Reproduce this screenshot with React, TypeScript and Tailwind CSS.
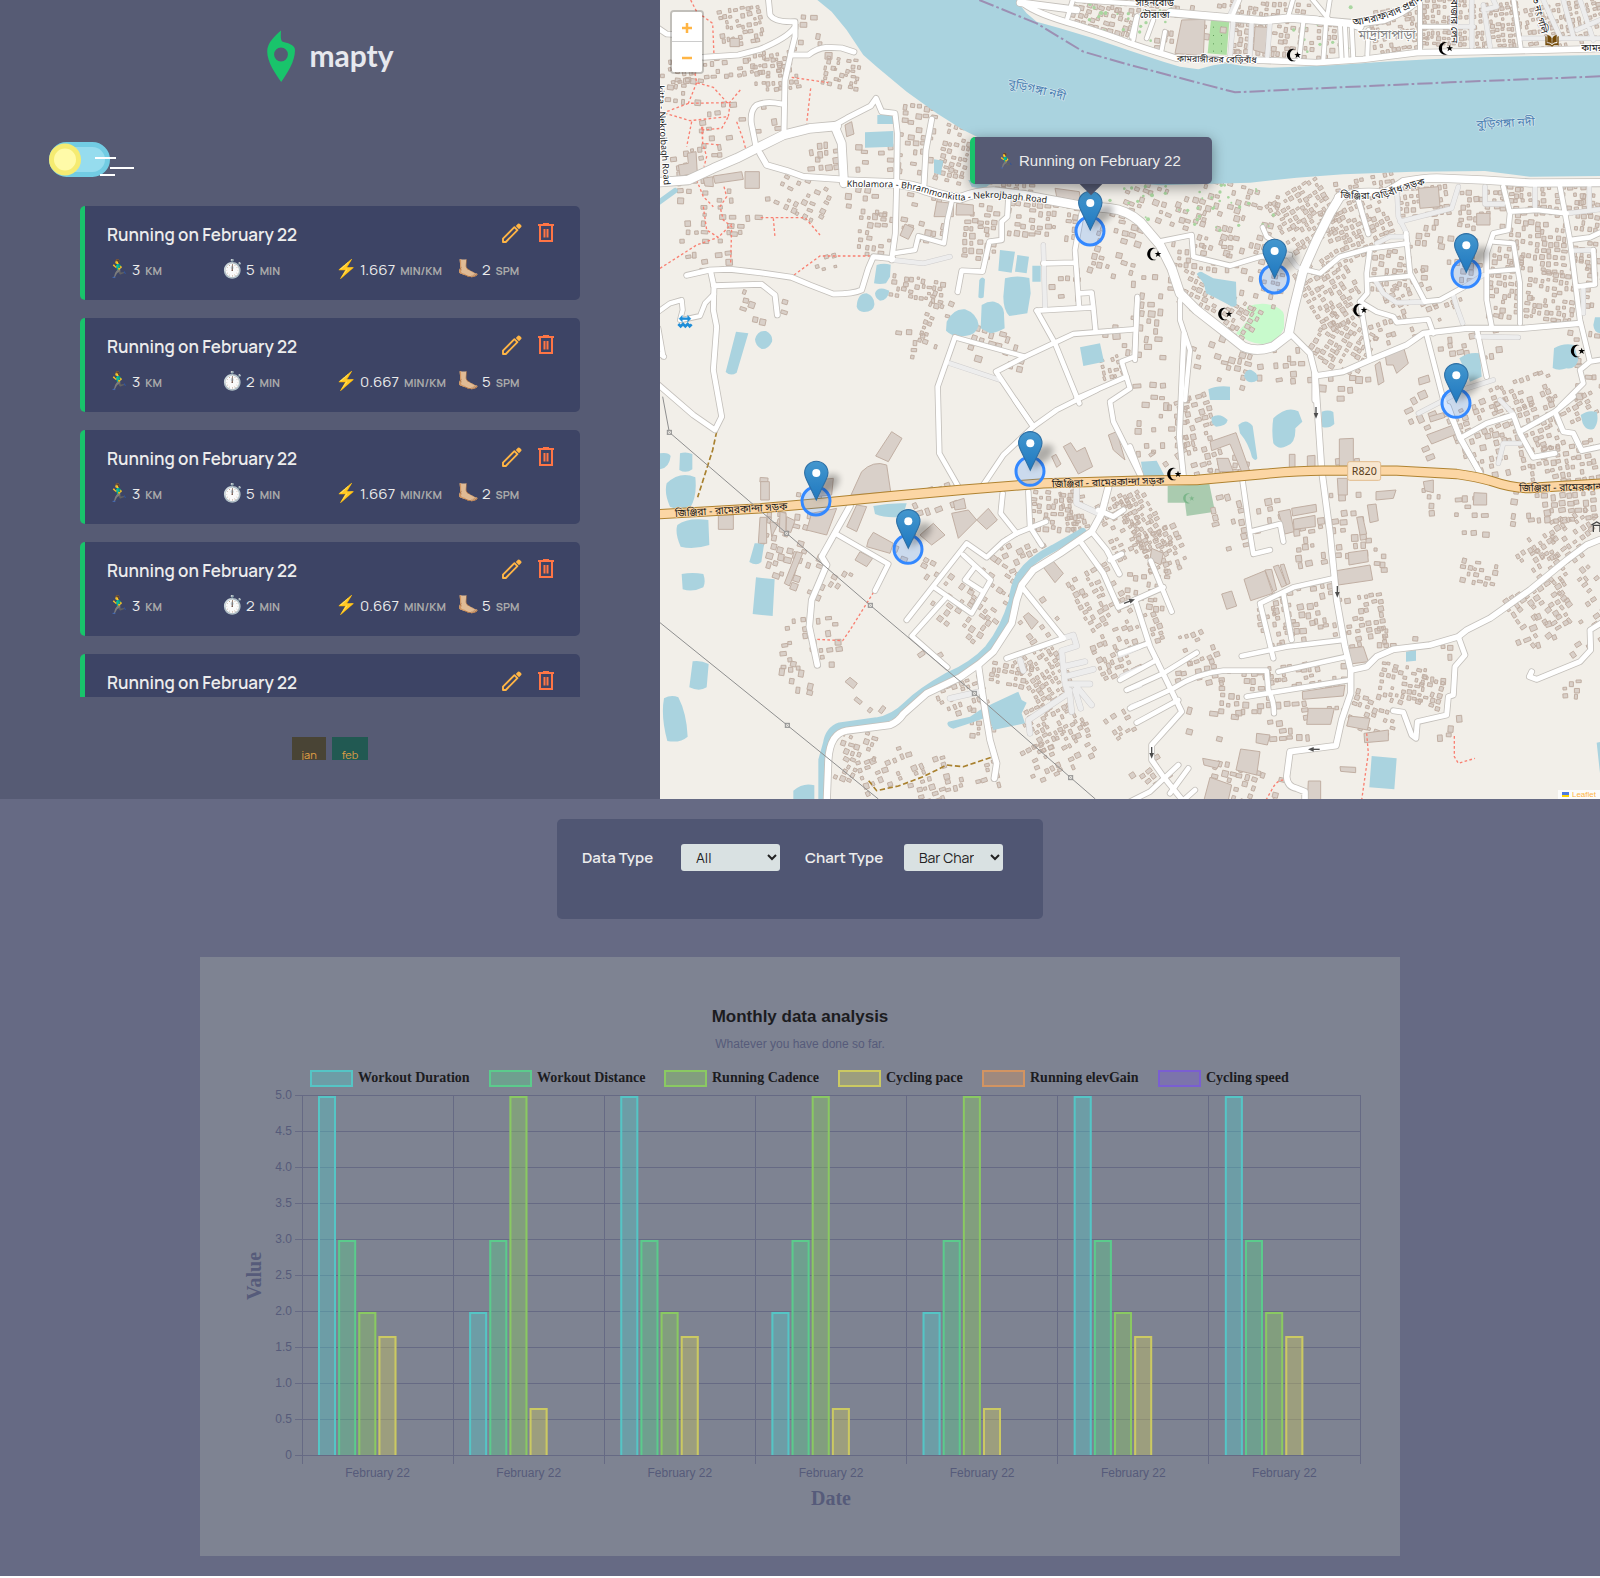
import React from "react";

/* ------------------------------------------------------------------ */
/* Map data: four tiles, drawn at three units per pixel                */
/* ------------------------------------------------------------------ */

type Tile = "A" | "B" | "C" | "D";

const ORIGIN: Record<Tile, [number, number]> = {
  A: [0, 0],
  B: [1410, 0],
  C: [0, 1200],
  D: [1410, 1200],
};

const place = (t: Tile) => `translate(${ORIGIN[t][0]} ${ORIGIN[t][1]})`;

type Shape = [Tile, string];
type Road = [Tile, number, string];

const water: Shape[] = [
  ["A", "M472 0L515 35L560 90L610 165L650 200L740 275L830 340L910 390L990 430L1300 540L1500 556L1770 548L1910 533L2050 523L2260 515L2475 513L2610 530L2820 528V165L2640 168L2460 172L2310 178L2170 185L2030 195L1910 200L1830 203L1750 198L1700 190L1660 196L1615 208L1560 200L1510 185L1410 152L1300 115L1200 85L1130 65L1100 40L1080 15L1075 0Z"],
  ["A", "M652 345H700V372H652ZM615 397L700 393V440L615 443ZM822 478L850 482L842 525L822 518ZM925 540L1000 545L970 568L935 560Z"],
  ["A", "M650 795Q670 788 692 794L690 830L678 850Q660 854 642 850ZM645 880Q650 862 672 866L688 872Q684 900 660 902Q646 896 645 880Z"],
  ["A", "M590 920Q592 880 620 880Q645 890 643 915Q640 936 612 936Q594 934 590 920ZM228 995L265 1000L230 1118Q212 1130 197 1116ZM285 1018Q292 990 318 993Q340 1005 336 1025Q325 1048 305 1047Q286 1038 285 1018Z"],
  ["A", "M1020 750L1065 755L1055 818L1015 812ZM1072 765L1107 770L1100 820L1065 815ZM1117 797H1142V845H1117ZM1035 835Q1070 824 1108 834L1112 880L1102 940L1048 948Q1030 930 1030 890ZM958 840Q966 826 975 838L971 892Q962 898 955 892Z"],
  ["A", "M860 965Q880 925 915 928Q950 940 956 975Q950 1005 915 1008Q880 1014 858 992ZM965 915Q985 903 1003 905Q1035 915 1032 945L1034 985Q1010 998 990 1000L962 985ZM1260 1042L1320 1030L1332 1085L1270 1098Z"],
  ["B", "M200 822Q212 810 222 820L250 835L318 845L320 915Q308 926 296 914L250 890L228 880L222 852Z"],
  ["B", "M342 1128Q348 1106 364 1110Q386 1120 383 1140Q366 1152 350 1142ZM235 1168Q260 1156 300 1160V1200H240ZM988 1075Q1015 1055 1050 1060L1055 1130L1020 1145ZM1272 1045Q1300 1028 1332 1035L1345 1080Q1335 1110 1310 1105Q1285 1114 1268 1104ZM1395 952H1410V1000Q1392 998 1390 975Z"],
  ["C", "M0 160Q26 156 32 168Q28 204 0 208ZM60 160Q78 154 97 162V208Q78 222 58 210ZM20 250Q60 212 106 232Q112 290 90 324Q58 334 30 320Q12 280 20 250ZM52 375Q82 352 145 360L148 435Q100 450 62 440Q44 400 52 375ZM284 430Q298 428 312 434L304 486Q290 500 268 486ZM65 522Q98 516 130 522Q138 545 130 562Q98 578 68 568ZM288 532L344 538L338 648L278 642Z"],
  ["C", "M98 784Q122 780 146 792L140 862Q118 876 88 862ZM12 895Q34 882 55 892Q80 940 83 1010Q60 1030 22 1023Q2 950 12 895ZM640 318Q690 308 740 310L728 350Q680 356 645 342ZM400 1172Q430 1146 463 1156V1200H400Z"],
  ["C", "M865 965L930 950L960 930L1000 910L1075 875L1085 900L1100 908L1085 940L1095 970L1000 990L985 950L930 970L880 986Q862 982 862 970Z"],
  ["D", "M245 52Q270 36 293 60Q290 78 258 80Q242 72 245 52ZM325 75Q348 52 368 78L382 175Q376 186 366 172Q356 130 330 100ZM430 55Q470 16 505 34L517 65L496 85Q498 130 470 138Q446 152 430 130Q424 90 430 55ZM575 35Q596 28 610 36L613 72Q596 88 575 80ZM1352 45Q1375 28 1400 36Q1408 64 1392 86Q1370 96 1358 70ZM33 185L80 182L105 230H40Z"],
  ["D", "M725 1068L800 1075L793 1168L718 1162ZM828 755L858 750V782L828 785ZM1400 1028L1410 1026V1120Z"],
];

const canals: Road[] = [
  ["C", 22, "M1268 395L1180 445Q1110 480 1080 525Q1060 560 1058 600Q1030 690 985 745Q940 795 860 830Q780 875 740 915Q700 955 650 963L540 978Q506 990 500 1030L486 1080V1200"],
  ["A", 16, "M-5 608L45 572"],
];

const highway: Shape[] = [
  ["C", "M-10 343L300 325L470 310L700 288L900 270L1150 250L1440 242L1610 240L1810 222Q1930 210 2010 212L2210 212L2390 222Q2450 230 2490 242Q2560 266 2610 264L2840 250"],
];

const roads: Road[] = [
  ["A", 26, "M-10 547L85 540L160 505L230 475L300 440L370 405L450 385L530 378"],
  ["A", 24, "M525 382L545 430L552 550"],
  ["A", 26, "M552 545L700 550Q760 555 800 572Q860 592 900 595Q950 575 1000 575L1100 587L1250 615L1350 625Q1400 630 1440 665L1500 735L1535 805L1560 880L1610 930L1700 1000L1750 1040Q1790 1058 1840 1040L1885 1005L1900 930L1930 810L1970 720L2010 640L2040 590"],
  ["B", 22, "M625 592Q690 570 760 580Q800 560 820 545Q880 535 920 534L1060 540L1200 549L1410 548"],
  ["B", 22, "M120 38L400 62L480 54L660 70L690 80M480 54L560 60"],
  ["B", 20, "M-330 8L-160 30M670 72L760 60Q820 40 865 0"],
  ["B", 17, "M-320 10Q-280 42 -160 75Q-50 110 0 130L60 150L140 175L400 181L560 188L700 178L860 158L1050 155L1410 146"],
  ["A", 15, "M325 -5L330 45Q345 68 405 65L405 110L395 150L375 240L372 392"],
  ["A", 15, "M402 85Q380 115 300 148L235 165L130 172M-5 85L20 102L60 104"],
  ["A", 15, "M392 165H445Q470 145 500 142L545 144L582 156"],
  ["A", 15, "M365 312Q320 302 290 315Q270 330 274 370L288 440"],
  ["A", 15, "M530 372L560 355L632 318L648 295L665 335L705 340L712 400L710 550L706 700L695 780"],
  ["A", 15, "M815 358L798 450L792 555"],
  ["A", 17, "M300 460L320 495L380 512L430 530L548 538"],
  ["A", 15, "M80 826L150 810L210 808L300 818L395 832L450 855L520 882Q580 882 605 870L625 805L640 770L698 776"],
  ["A", 13, "M700 760L765 750L775 708L852 730L862 660L875 605M885 1012L985 1040L1095 1070"],
  ["A", 15, "M152 815L162 860L160 930L170 980L160 1110L185 1250L165 1290L100 1245L-10 1150M160 857L305 853L345 885L352 945"],
  ["A", 13, "M162 882L135 910L120 948L65 960M-5 935L30 910L65 900L68 930L60 960"],
  ["A", 13, "M-5 985L10 1070M-5 1060L12 1070"],
  ["A", 14, "M1045 595L1042 650L1025 665V720L988 725L968 815L905 812L893 876"],
  ["A", 14, "M1265 640L1245 750L1257 920M1150 790L1245 788M1130 932L1300 922L1295 878L1257 880M1300 922L1307 995"],
  ["A", 14, "M1130 932L1185 1030L1258 1210M1420 988L1240 1002L1180 1030L1095 1070L1008 1115L1065 1200L1120 1280"],
  ["A", 14, "M885 1012L833 1160L838 1360L895 1460"],
  ["A", 14, "M1432 895L1424 1070L1385 1085L1410 1165L1350 1205L1360 1265L1440 1425M1400 1130L1250 1195"],
  ["A", 13, "M1240 -5L1222 55M1430 50L1415 110M1250 0L1440 12"],
  ["B", 12, "M870 -5V150M630 75L635 180M645 80L650 180M520 65L508 172M588 70L580 180M665 80L670 175M715 90L712 165M22 48L10 120M70 60L50 115M105 95L95 150"],
  ["B", 12, "M1150 -5L1172 142M870 80H960M330 -5L310 42M490 -5L475 48M545 -5L600 62M600 -5L590 60"],
  ["B", 14, "M1120 560L1140 640L1135 690L1090 700L1070 760V900L1085 980M1140 635L1220 630L1310 640"],
  ["B", 14, "M1290 560L1320 720L1350 960L1380 1085L1350 1110L1360 1150L1290 1220M1320 720L1380 712L1410 698M1340 860L1395 853L1390 750M1378 1085L1410 1080"],
  ["B", 13, "M1090 725L1150 730L1170 850V970M1075 815L1160 808"],
  ["B", 16, "M480 1000L540 1060L555 1120V1200M555 1128L640 1115L720 1080L830 1035L880 1000L1010 985L1180 985L1350 970"],
  ["B", 14, "M530 810L570 820L630 770L720 745L832 730M685 600L715 702M720 745L710 820L712 880L690 905L720 1080"],
  ["B", 14, "M712 840L840 828M828 700L840 820L885 905L930 900L1000 862M690 905L740 935L790 950L800 967L895 958L910 1000M890 1005L940 1200L990 1310L1050 1420"],
  ["B", 14, "M1040 985L1070 1130M85 725L185 705L190 770L300 797L390 770L480 765"],
  ["B", 13, "M398 682L410 710L440 730M150 900L150 960L180 1050L165 1200M22 890L15 1080"],
  ["C", 14, "M1065 0L1120 80M1310 -30L1190 30L1120 80L1030 165L965 262"],
  ["C", 17, "M570 318L485 470L500 495L455 600L448 680L472 795"],
  ["C", 14, "M525 400L685 492L645 572M1028 280L1022 340L1070 400M1105 275L1110 380L1145 435"],
  ["C", 14, "M1158 365L1070 400L1030 425L980 472L920 430L740 660M910 465L992 540L935 640L820 560M945 500L915 540L965 572M860 590L755 708L862 802"],
  ["C", 19, "M500 1210L505 1080Q510 1000 560 992L690 975Q715 965 730 942L800 880L900 832L960 790L1000 755L1055 670L1070 600L1085 555L1120 510L1200 460L1295 395L1325 340L1345 262"],
  ["C", 15, "M1265 430L1330 520L1375 622L1510 562M1295 395L1340 450L1378 522M1350 480L1385 462M1085 560L1210 715L1040 775M1315 330L1360 350L1390 330"],
  ["C", 17, "M955 795L975 930L990 1020L1010 1090L1003 1135"],
  ["D", 15, "M162 -200L148 110L160 225M0 140L32 225"],
  ["D", 17, "M555 -80L575 210L600 400L620 600L645 740L662 810V880L635 960L618 1037L480 1055L470 1130Q472 1160 500 1165L525 1175V1210"],
  ["D", 14, "M338 245L360 400L370 462L420 450M360 395L450 372L460 425"],
  ["D", 14, "M610 535L490 562L390 610L430 775M460 580L485 720M335 768L470 740L640 720M445 815L650 770M350 890L660 840M62 482L125 635"],
  ["D", 15, "M15 600L60 740L155 935L65 1035V1080L100 1130L165 1210"],
  ["D", 14, "M-30 760L55 730M-30 840L80 780M-10 870L100 820L200 758M0 925L130 865Q200 820 280 812H410L415 870Q432 900 432 940M20 968L145 900M145 1095L60 1175L0 1205M175 1105L120 1180M195 1170L150 1210"],
  ["D", 17, "M665 810L710 800L740 770L790 748L900 735L985 710L1010 690L1080 655L1200 570L1310 480L1370 435L1420 415"],
  ["D", 15, "M985 710L1005 765L975 800L970 885L955 890L950 945L862 965L858 1015L845 1005L820 937L790 932M1420 665L1380 690L1382 750L1350 785L1220 838L1198 830L1205 815"],
  ["D", 15, "M955 20L990 115L1050 218M990 115L1070 70L1150 45L1170 100L1210 172L1275 160M1170 95L1275 35L1300 95L1330 100L1355 152L1420 138M1275 35L1330 -10"],
];

const lanes: Road[] = [
  ["A", 13, "M1150 735L1155 925M870 1090L1020 1140M700 780L790 790L870 770"],
  ["B", 13, "M310 60L300 170M420 65L412 170M365 62L360 165M320 0L300 45M1025 0V140M960 80L1030 80M1060 15L1080 140M1090 0L1100 20L1060 30M1175 115H1410M1240 0L1290 110M1300 0L1330 110M1350 0L1390 120M1340 90L1410 60"],
  ["B", 13, "M985 560L965 625L810 665M800 560L805 650L830 700M1215 560V620M1065 560V612H1120M1310 640L1410 628M1378 560V630M1330 752L1390 750M740 730L780 710H830"],
  ["B", 13, "M735 840L760 880L800 908L885 906M1000 862L1060 825M968 880L980 920L998 970M1040 1010L1165 1012M470 760L500 800L530 812M1360 860V940"],
  ["C", 16, "M870 895L960 875M1210 715L1240 705L1250 738L1205 752L1215 850L1225 880L1105 960L1110 1000M1215 830L1300 808M1220 852H1290M1210 800L1275 785M1250 860L1295 915M1228 870L1235 935M1245 870L1262 925M1080 780L1090 812M1250 262V310L1315 340"],
  ["C", 14, "M1380 765L1440 740M1385 830L1440 805M1405 868L1440 855M1415 920L1440 910"],
  ["D", 13, "M865 40L1010 -35L1090 -60M1110 0L1150 42M1170 130H1120L1105 190"],
];

const footpaths: Shape[] = [
  ["A", "M92 0L110 35L158 70L162 168M105 220L110 248L160 262L205 312L245 265M110 248L85 310L205 308M0 335L90 362L205 350L210 312M85 310L20 335M95 365L80 440M125 380L128 430L180 435M125 390L185 385L205 350M230 365L250 420L258 450M110 540L130 590L160 620M128 380V430L140 470L132 500"],
  ["A", "M192 560L200 590L180 620L190 660L215 680L212 790M130 620L140 690L175 712L215 672M0 805L110 735L175 712M302 653H435L480 705M340 655L345 712M402 825L480 768L640 768M395 232L505 248M452 265L440 370"],
  ["C", "M472 718L548 722L570 690L640 578"],
  ["D", "M710 1000L715 1060L695 1200M973 1008V1070L985 1090L1035 1075M460 1140Q440 1140 425 1170L408 1200"],
];

const tracks: Shape[] = [
  ["C", "M170 95L158 150L113 292M626 1142L650 1172L715 1158L790 1130L860 1095L910 1100L1000 1070"],
];

const bigBuildings: Shape[] = [
  ["A", "M160 528L245 515L250 538L165 550ZM255 515H298V565H255ZM130 535L158 530L160 560L135 558ZM55 495L85 490L82 460L108 455L112 520L60 528ZM210 115H238V140H210ZM555 375L575 365L582 402L560 410ZM735 672L762 685L745 718L720 706ZM830 605L880 610V650H822ZM1185 565L1258 575L1262 605L1190 590ZM890 610L940 615V645H888Z"],
  ["B", "M155 60L225 58L220 168L135 160ZM375 80L415 82L405 160L370 150ZM865 565L925 560L930 620L870 625ZM765 1060L820 1040L835 1090L800 1120L790 1095L770 1095ZM735 1095L750 1085L762 1145L745 1155ZM865 1135L895 1125L900 1145L868 1155ZM1040 640L1080 640V675H1040Z"],
  ["C", "M695 95L726 115L685 185L647 168ZM605 215Q640 180 680 195L692 275L573 285ZM302 245H328V300H302ZM175 345H220V388H175ZM470 240L520 235L515 285L465 290ZM560 380L590 315L620 320L590 395ZM455 340L530 325L500 405L440 390ZM875 340L925 330L950 360L895 415ZM950 360L985 325L1012 360L980 388ZM780 405L820 370L855 405L815 435ZM625 420L640 397L700 430L690 460L620 440ZM585 480L600 455L638 475L620 500Z"],
  ["C", "M300 352H320V430H295ZM330 365L355 370L335 410ZM360 335L378 340V400L358 395ZM380 350L405 362L392 398L378 390ZM410 455L428 460L388 558L373 550ZM1210 140L1232 128L1250 155L1275 142L1298 200L1255 222ZM1145 495L1170 472L1210 520L1185 548ZM1345 105L1370 95L1395 180L1360 150ZM1090 650L1105 638L1135 665L1115 688ZM555 845L570 832L592 850L580 866ZM880 305L912 295L918 325L885 330ZM1175 170L1188 163L1203 192L1190 202Z"],
  ["D", "M240 125L318 98L358 210L335 215L300 132L245 152ZM628 117L670 115V200H628ZM445 335L480 328L492 395L465 402ZM485 325L558 313L560 335L488 348ZM490 358L555 346L556 380L492 388ZM342 538L405 512L428 580L362 602ZM405 510L425 508L440 570L430 575ZM430 500L445 495L470 555L455 562ZM450 495L462 492L480 550L470 555ZM275 582L305 573L320 618L290 628ZM655 458L712 450L715 485L657 495ZM620 512L720 495L728 540L625 555Z"],
  ["D", "M535 925H613L602 973H530ZM332 1047L390 1055L380 1125L318 1110ZM517 875L645 855L640 888L518 898ZM658 948L720 955L712 990L650 978ZM535 1143H572V1200H532ZM702 1000L775 990V1022L704 1028ZM240 1132L305 1155L295 1200H222ZM738 275L798 270L790 295L738 300ZM712 315L738 312L745 362L720 368ZM680 352L698 350L710 402L690 405ZM1032 278L1070 280V315H1030ZM880 245L910 240V278L885 272ZM890 105L970 75L985 100L905 132ZM897 50L940 38L945 52L902 66ZM655 745L700 740L715 785L660 792ZM380 1000L420 1005L412 1035L378 1028ZM622 235H652V285H625ZM478 163H495V205H478ZM532 168L555 166V202H532ZM218 1075L270 1085L262 1105L222 1095ZM630 1100L677 1102V1118L632 1114ZM260 175L295 175L310 215H268ZM65 445L100 460L92 495L60 480Z"],
];

/* tile, centre x, centre y, width, height, angle, cell, density */
type Cluster = [Tile, number, number, number, number, number, number, number];

const clusters: Cluster[] = [
  ["A", 235, 75, 120, 110, -8, 17, 0.62],
  ["A", 190, 200, 330, 80, -6, 20, 0.5],
  ["A", 345, 210, 130, 110, -5, 17, 0.7],
  ["A", 545, 215, 110, 90, 10, 16, 0.75],
  ["A", 455, 105, 130, 130, 5, 26, 0.3],
  ["A", 60, 260, 130, 110, 5, 22, 0.45],
  ["A", 180, 380, 130, 150, -5, 24, 0.4],
  ["A", 320, 350, 80, 100, -5, 26, 0.4],
  ["A", 80, 490, 110, 90, -5, 22, 0.6],
  ["A", 480, 465, 80, 90, -5, 25, 0.5],
  ["A", 425, 590, 150, 120, 25, 20, 0.5],
  ["A", 640, 470, 120, 90, 0, 24, 0.5],
  ["A", 760, 410, 90, 200, 5, 22, 0.6],
  ["A", 885, 460, 90, 170, 15, 18, 0.75],
  ["A", 130, 660, 160, 190, 0, 24, 0.36],
  ["A", 260, 640, 110, 110, 0, 26, 0.3],
  ["A", 640, 690, 90, 130, 5, 21, 0.6],
  ["A", 620, 600, 130, 90, 5, 26, 0.4],
  ["A", 790, 650, 130, 130, 10, 24, 0.5],
  ["A", 960, 690, 110, 160, 3, 22, 0.75],
  ["A", 1140, 660, 200, 110, 5, 22, 0.75],
  ["A", 1040, 560, 200, 40, 5, 20, 0.6],
  ["A", 1370, 730, 130, 190, 15, 23, 0.45],
  ["A", 1200, 840, 80, 130, 0, 26, 0.4],
  ["A", 490, 800, 90, 70, -15, 18, 0.45],
  ["A", 120, 780, 150, 50, -5, 24, 0.45],
  ["A", 770, 860, 160, 60, 8, 18, 0.6],
  ["A", 825, 955, 70, 170, 18, 19, 0.62],
  ["A", 750, 1030, 90, 80, 5, 24, 0.4],
  ["A", 300, 930, 130, 100, 15, 24, 0.35],
  ["A", 1000, 1030, 200, 80, 15, 26, 0.4],
  ["A", 1380, 980, 110, 150, 0, 30, 0.3],
  ["A", 1350, 1100, 60, 60, -15, 17, 0.8],
  ["A", 1330, 50, 200, 70, 15, 20, 0.8],
  ["B", 60, 25, 250, 40, 5, 20, 0.7],
  ["B", 210, 95, 280, 100, 5, 24, 0.35],
  ["B", 470, 110, 340, 110, 4, 20, 0.65],
  ["B", 400, 22, 280, 44, 5, 18, 0.7],
  ["B", 800, 80, 160, 120, -8, 17, 0.7],
  ["B", 950, 60, 160, 130, 0, 16, 0.85],
  ["B", 1095, 70, 130, 130, -5, 16, 0.85],
  ["B", 1300, 70, 230, 130, -10, 17, 0.8],
  ["B", 110, 610, 260, 90, 18, 22, 0.5],
  ["B", 310, 650, 230, 200, 15, 22, 0.5],
  ["B", 520, 650, 170, 180, -30, 18, 0.8],
  ["B", 700, 550, 180, 40, -10, 19, 0.6],
  ["B", 680, 680, 190, 170, -22, 18, 0.85],
  ["B", 880, 600, 160, 90, -5, 20, 0.7],
  ["B", 1050, 630, 130, 120, 0, 20, 0.6],
  ["B", 1250, 600, 280, 90, 0, 20, 0.75],
  ["B", 950, 740, 200, 170, 5, 24, 0.5],
  ["B", 1220, 740, 180, 160, 3, 20, 0.75],
  ["B", 1120, 850, 90, 220, 5, 20, 0.65],
  ["B", 1260, 890, 150, 150, 5, 19, 0.8],
  ["B", 1370, 700, 80, 240, 5, 20, 0.6],
  ["B", 600, 870, 160, 200, -30, 18, 0.7],
  ["B", 780, 800, 110, 150, 5, 19, 0.65],
  ["B", 640, 1030, 170, 140, 30, 19, 0.75],
  ["B", 830, 880, 150, 120, -20, 19, 0.5],
  ["B", 800, 990, 160, 80, -15, 20, 0.5],
  ["B", 390, 860, 130, 100, 10, 22, 0.45],
  ["B", 220, 770, 200, 80, 5, 21, 0.5],
  ["B", 200, 880, 130, 120, 25, 20, 0.6],
  ["B", 330, 950, 110, 100, 30, 19, 0.6],
  ["B", 60, 950, 130, 260, 5, 26, 0.38],
  ["B", 260, 1070, 170, 130, 15, 24, 0.4],
  ["B", 430, 1090, 200, 100, -5, 24, 0.4],
  ["B", 640, 1160, 150, 70, 0, 28, 0.35],
  ["B", 1000, 1040, 200, 80, -8, 24, 0.35],
  ["B", 1360, 900, 90, 260, 5, 22, 0.4],
  ["B", 1370, 1130, 80, 130, 0, 26, 0.4],
  ["B", 60, 1180, 120, 70, 0, 30, 0.5],
  ["B", 1180, 1180, 200, 100, -20, 20, 0.6],
  ["B", 960, 930, 100, 60, -20, 20, 0.4],
  ["C", 385, 300, 200, 180, 5, 30, 0.2],
  ["C", 360, 440, 120, 170, 15, 26, 0.5],
  ["C", 450, 520, 100, 130, 20, 27, 0.5],
  ["C", 540, 540, 60, 70, 30, 22, 0.3],
  ["C", 830, 270, 180, 90, -20, 28, 0.4],
  ["C", 700, 420, 120, 90, 25, 24, 0.4],
  ["C", 800, 500, 90, 60, 30, 24, 0.5],
  ["C", 440, 720, 170, 140, -5, 23, 0.42],
  ["C", 400, 830, 90, 110, 10, 28, 0.35],
  ["C", 640, 900, 110, 80, 35, 28, 0.3],
  ["C", 900, 620, 170, 140, 35, 24, 0.5],
  ["C", 1000, 560, 120, 160, 35, 22, 0.45],
  ["C", 1080, 440, 120, 90, -25, 22, 0.55],
  ["C", 1180, 330, 140, 120, 5, 21, 0.75],
  ["C", 1380, 380, 100, 180, -25, 19, 0.75],
  ["C", 1240, 330, 70, 120, -10, 18, 0.6],
  ["C", 1310, 590, 130, 170, -28, 20, 0.7],
  ["C", 1140, 660, 130, 120, -35, 24, 0.4],
  ["C", 1050, 820, 120, 60, 10, 18, 0.6],
  ["C", 1150, 830, 120, 170, -30, 17, 0.8],
  ["C", 900, 890, 140, 90, -20, 19, 0.65],
  ["C", 800, 750, 130, 60, -30, 26, 0.3],
  ["C", 1180, 960, 180, 130, -25, 18, 0.65],
  ["C", 1360, 760, 120, 140, -22, 21, 0.75],
  ["C", 1200, 1060, 220, 120, -25, 20, 0.5],
  ["C", 960, 960, 60, 80, 0, 19, 0.5],
  ["C", 600, 1030, 120, 80, 20, 21, 0.55],
  ["C", 720, 1090, 260, 100, -20, 22, 0.5],
  ["C", 880, 1150, 280, 80, -15, 22, 0.5],
  ["C", 560, 1110, 60, 80, 25, 20, 0.5],
  ["C", 1380, 970, 80, 70, -30, 20, 0.65],
  ["D", 90, 60, 150, 190, 0, 23, 0.45],
  ["D", 200, 100, 90, 230, -15, 22, 0.6],
  ["D", 100, 150, 90, 80, -30, 22, 0.5],
  ["D", 310, 190, 150, 60, 5, 22, 0.6],
  ["D", 290, 370, 90, 180, -12, 26, 0.55],
  ["D", 400, 340, 90, 90, -10, 26, 0.4],
  ["D", 540, 430, 100, 150, -8, 25, 0.7],
  ["D", 640, 320, 80, 300, -5, 26, 0.5],
  ["D", 730, 460, 50, 90, 0, 22, 0.5],
  ["D", 520, 640, 180, 160, -8, 24, 0.65],
  ["D", 430, 680, 90, 130, -8, 22, 0.45],
  ["D", 690, 660, 130, 150, -8, 20, 0.65],
  ["D", 800, 710, 130, 60, 0, 22, 0.4],
  ["D", 40, 380, 90, 220, -30, 17, 0.85],
  ["D", 90, 450, 110, 130, -20, 21, 0.6],
  ["D", 50, 560, 130, 120, 5, 22, 0.5],
  ["D", 40, 690, 90, 90, -20, 20, 0.7],
  ["D", 190, 740, 110, 90, -22, 20, 0.5],
  ["D", 200, 820, 140, 80, -10, 22, 0.5],
  ["D", 350, 870, 170, 120, 0, 23, 0.55],
  ["D", 480, 830, 170, 80, -8, 20, 0.6],
  ["D", 620, 860, 70, 150, 0, 22, 0.55],
  ["D", 460, 960, 150, 120, -5, 26, 0.5],
  ["D", 240, 990, 160, 120, 10, 32, 0.3],
  ["D", 730, 930, 140, 110, 18, 21, 0.6],
  ["D", 810, 840, 130, 100, 10, 18, 0.72],
  ["D", 900, 870, 70, 80, 15, 19, 0.5],
  ["D", 930, 790, 60, 120, 0, 24, 0.35],
  ["D", 340, 1150, 200, 110, 15, 24, 0.6],
  ["D", 60, 1120, 110, 80, -35, 22, 0.5],
  ["D", 880, 80, 80, 200, -25, 30, 0.5],
  ["D", 1040, 60, 180, 110, -20, 22, 0.65],
  ["D", 1100, 160, 200, 130, -12, 23, 0.6],
  ["D", 1230, 80, 110, 160, -18, 20, 0.75],
  ["D", 1300, 190, 210, 120, -10, 21, 0.75],
  ["D", 1330, 30, 130, 70, -25, 20, 0.5],
  ["D", 1290, 300, 210, 100, -5, 24, 0.65],
  ["D", 1300, 400, 200, 110, -35, 21, 0.6],
  ["D", 1220, 460, 120, 60, -30, 19, 0.5],
  ["D", 1040, 510, 100, 60, 10, 19, 0.7],
  ["D", 1010, 340, 80, 110, 0, 26, 0.45],
  ["D", 900, 300, 60, 80, 0, 22, 0.55],
  ["D", 1170, 320, 60, 110, 5, 24, 0.4],
  ["D", 1230, 620, 180, 160, -35, 22, 0.5],
  ["D", 1350, 560, 130, 180, -35, 22, 0.5],
  ["D", 1350, 700, 120, 120, -30, 24, 0.45],
  ["D", 1200, 690, 110, 80, -20, 26, 0.35],
  ["D", 950, 980, 60, 70, 0, 26, 0.5],
  ["D", 1320, 865, 50, 50, 0, 19, 0.6],
];

function seeded(seed: number) {
  let s = seed;
  return () => {
    s = (s * 1664525 + 1013904223) % 4294967296;
    return s / 4294967296;
  };
}

/* Scatters small houses on a jittered grid, rotated about the cluster's centre. */
function housesOf([t, cx, cy, w, h, angle, cell, density]: Cluster, seed: number) {
  const rnd = seeded(seed * 7919 + 17);
  const base = (angle * Math.PI) / 180;
  const [ox, oy] = ORIGIN[t];
  let d = "";
  for (let y = -h / 2; y < h / 2; y += cell) {
    for (let x = -w / 2; x < w / 2; x += cell) {
      const keep = rnd();
      const bw = cell * (0.38 + rnd() * 0.45);
      const bh = cell * (0.38 + rnd() * 0.4);
      const jx = x + rnd() * cell * 0.4;
      const jy = y + rnd() * cell * 0.4;
      const a = base + (rnd() - 0.5) * 0.16;
      if (keep > density) continue;
      const px = ox + cx + jx * Math.cos(base) - jy * Math.sin(base);
      const py = oy + cy + jx * Math.sin(base) + jy * Math.cos(base);
      const c = Math.cos(a);
      const s = Math.sin(a);
      const pts = [
        [0, 0],
        [bw, 0],
        [bw, bh],
        [0, bh],
      ].map(([u, v]) => `${(px + u * c - v * s).toFixed(1)} ${(py + u * s + v * c).toFixed(1)}`);
      d += `M${pts.join("L")}Z`;
    }
  }
  return d;
}

const houses = clusters.map(housesOf).join("");

const treeSpots = (() => {
  const rnd = seeded(91);
  const areas: [number, number, number, number, number][] = [
    [1440, 555, 430, 140, 34],
    [1270, 10, 140, 90, 14],
    [1430, 20, 120, 130, 10],
    [1890, 10, 200, 170, 12],
    [1350, 560, 90, 60, 6],
  ];
  return areas.flatMap(([x, y, w, h, n]) =>
    Array.from({ length: n }, () => [Math.round(x + rnd() * w), Math.round(y + rnd() * h), 3 + Math.round(rnd() * 3)]),
  );
})();

const pylons: [number, number][] = [
  [28, 1297],
  [380, 1600],
  [631, 1816],
  [943, 2080],
  [1232, 2333],
  [382, 2176],
];

const mosques: [number, number][] = [
  [1900, 165],
  [2356, 145],
  [1481, 762],
  [1694, 942],
  [2099, 930],
  [2752, 1053],
  [1541, 1422],
];

/* Marker tips in map units */
const pins: [number, number][] = [
  [1291, 690],
  [1844, 834],
  [2419, 817],
  [2389, 1207],
  [469, 1500],
  [745, 1645],
  [1111, 1411],
];

const label = {
  fontFamily: '"Noto Sans", "Noto Sans Bengali", sans-serif',
  stroke: "#ffffff",
  strokeWidth: 6,
  paintOrder: "stroke" as const,
  strokeLinejoin: "round" as const,
};

function Mosque({ x, y, color = "#000", s = 1 }: { x: number; y: number; color?: string; s?: number }) {
  return (
    <g transform={`translate(${x} ${y}) scale(${s})`} fill={color}>
      <path d="M8 -17A19 19 0 1 0 8 17A15 15 0 0 1 -10 0A15.500 15.500 0 0 1 8 -17Z" />
      <path d="M13 -10L15.500 -3L23 -3L17 1.500L19.500 9L13 4.500L6.500 9L9 1.500L3 -3L10.500 -3Z" />
    </g>
  );
}

function Arrow({ x, y, r }: { x: number; y: number; r: number }) {
  return (
    <g transform={`translate(${x} ${y}) rotate(${r})`}>
      <path d="M-17 0H6" stroke="#4d4d4d" strokeWidth="4" />
      <path d="M1 -7L18 0L1 7Z" fill="#4d4d4d" />
    </g>
  );
}

function CityMap() {
  return (
    <svg className="absolute inset-0 h-full w-full" viewBox="0 0 2820 2397" preserveAspectRatio="xMinYMin slice" role="img" aria-label="Street map with workout locations">
      <defs>
        <linearGradient id="pin" x1="0" y1="0" x2="0" y2="1">
          <stop offset="0" stopColor="#4497ce" />
          <stop offset="1" stopColor="#1f78c0" />
        </linearGradient>
        <filter id="soft" x="-50%" y="-50%" width="200%" height="200%">
          <feGaussianBlur stdDeviation="10" />
        </filter>
        <path id="kholamora" d="M560 561L700 562Q760 566 800 580Q860 600 910 601Q970 592 1020 594L1240 618" />
        <path id="nekroj" d="M-10 150Q-6 340 12 556" />
        <path id="river1" d="M1044 263Q1130 276 1245 312" />
        <path id="dike" d="M2040 594Q2130 602 2190 590Q2230 568 2320 548" />
        <path id="hw1" d="M46 1551L420 1527" />
        <path id="hw2" d="M1176 1463L1560 1451" />
        <path id="ashraf" d="M2080 76Q2210 62 2310 -14" />
      </defs>
      <rect width="2820" height="2397" fill="#f2efe9" />
      <path d="M350 920Q390 906 420 914Q462 926 462 945V985Q448 1015 430 1024Q380 1048 318 1000Q350 970 358 950Z" transform={place("B")} fill="#c8facc" />
      <path d="M243 58L298 62L290 165L233 160Z" transform={place("B")} fill="#aedfa3" />
      <g transform={place("B")} fill="#5f9a58">
        {[80, 105, 130, 152].map((y) => (
          <g key={y}>
            <rect x="249" y={y} width="3" height="3" />
            <rect x="273" y={y} width="3" height="3" />
          </g>
        ))}
      </g>
      <path d="M113 258L238 252L255 335L170 348L165 308H113Z" transform={place("D")} fill="#aacbaf" />
      <g fill="#d9d0c9" stroke="#c1afa3" strokeWidth="3">
        <path d={houses} />
        {bigBuildings.map(([t, d], i) => (
          <path key={i} d={d} transform={place(t)} />
        ))}
      </g>
      <g fill="#aad3df">
        {water.map(([t, d], i) => (
          <path key={i} d={d} transform={place(t)} />
        ))}
      </g>
      <g fill="none" stroke="#aad3df" strokeLinecap="round">
        {canals.map(([t, w, d], i) => (
          <path key={i} d={d} strokeWidth={w} transform={place(t)} />
        ))}
      </g>
      <g fill="#a9d6a0">
        {treeSpots.map(([x, y, r], i) => (
          <circle key={i} cx={x} cy={y} r={r} />
        ))}
      </g>
      <path d="M958 0L1130 70L1270 155L1410 195L1725 277L1910 268L2370 247L2820 229" fill="none" stroke="#9c8fb3" strokeWidth="6" strokeDasharray="46 9 8 9" />
      <g fill="none" stroke="#f98072" strokeWidth="4" strokeDasharray="8 7">
        {footpaths.map(([t, d], i) => (
          <path key={i} d={d} transform={place(t)} />
        ))}
      </g>
      <g fill="none" stroke="#a9812f" strokeWidth="5" strokeDasharray="16 8">
        {tracks.map(([t, d], i) => (
          <path key={i} d={d} transform={place(t)} />
        ))}
      </g>
      <g fill="none" strokeLinecap="round" strokeLinejoin="round">
        {lanes.map(([t, w, d], i) => (
          <path key={i} d={d} strokeWidth={w + 3} stroke="#cfcdcd" transform={place(t)} />
        ))}
        {roads.map(([t, w, d], i) => (
          <path key={i} d={d} strokeWidth={w + 5} stroke="#c4c0bb" transform={place(t)} />
        ))}
        {lanes.map(([t, w, d], i) => (
          <path key={i} d={d} strokeWidth={w} stroke="#ededed" transform={place(t)} />
        ))}
        {roads.map(([t, w, d], i) => (
          <path key={i} d={d} strokeWidth={w} stroke="#ffffff" transform={place(t)} />
        ))}
        {highway.map(([t, d], i) => (
          <g key={i} transform={place(t)}>
            <path d={d} strokeWidth="31" stroke="#b08331" />
            <path d={d} strokeWidth="25" stroke="#fcd6a4" />
          </g>
        ))}
      </g>
      <g fill="none" stroke="#8f8f8f" strokeWidth="3">
        <path d="M8 1190L28 1297L380 1600L631 1816L943 2080L1232 2333L1306 2397M0 1868L382 2176L655 2397" />
        {pylons.map(([x, y]) => (
          <g key={`${x}-${y}`}>
            <rect x={x - 6} y={y - 6} width="12" height="12" fill="#f2efe9" />
            <path d={`M${x - 6} ${y - 6}l12 12m0 -12l-12 12`} strokeWidth="1.5" />
          </g>
        ))}
      </g>
      <Arrow x={1968} y={1238} r={90} />
      <Arrow x={2032} y={1775} r={90} />
      <Arrow x={1475} y={2258} r={90} />
      <Arrow x={1962} y={2248} r={180} />
      <Arrow x={1408} y={1804} r={-20} />

      {mosques.map(([x, y]) => (
        <Mosque key={`${x}-${y}`} x={x} y={y} />
      ))}
      <Mosque x={1585} y={1495} color="#7cb68a" s={0.8} />
      <g transform="translate(2676 122)" fill="#734a08">
        <path d="M-20 -14L-16 -12V8Q-6 6 0 14Q6 6 16 8V-12L20 -14V14H6L0 18L-6 14H-20Z" />
        <path d="M-14 -18Q-4 -16 -1 -8V10Q-6 3 -14 4ZM14 -18Q4 -16 1 -8V10Q6 3 14 4Z" />
      </g>
      <g transform="translate(75 963)" stroke="#1f8ed8" fill="none" strokeWidth="6">
        <path d="M-12 -7H12" strokeWidth="7" />
        <path d="M-8 -17V3L-18 -7ZM8 -17V3L18 -7Z" fill="#1f8ed8" strokeWidth="1" />
        <path d="M-20 9L-13 16L-6 9L1 16L8 9L14 16L20 10" strokeWidth="8" />
      </g>
      <g transform="translate(2806 1580)" fill="none" stroke="#444" strokeWidth="4">
        <path d="M-12 -5L4 -14L16 -8M-6 16V-4H14V16" />
      </g>

      <g fontSize="27" fill="#222" {...label}>
        <text><textPath href="#kholamora">Kholamora - Bhrammonkitta - Nekrojbagh Road</textPath></text>
        <text textAnchor="end"><textPath href="#nekroj" startOffset="100%">kitta - Nekrojbagh Road</textPath></text>
      </g>
      <g fontSize="29" fill="#222" {...label}>
        <text x="1484" y="17" textAnchor="middle">সাইনবোর্ড</text>
        <text x="1484" y="53" textAnchor="middle">চৌরাস্তা</text>
        <text x="1550" y="185" fontSize="27" transform="rotate(1 1550 185)">কামরাঙ্গীরচর বেড়িবাঁধ</text>
        <text x="2764" y="154">কামরাঙ্গীরচর</text>
        <text x="2374" y="-2" transform="rotate(90 2374 -2)">বাজার লেন</text>
        <text x="2616" y="-4" transform="rotate(75 2616 -4)">৩ নং গলি</text>
        <text><textPath href="#dike">জিঞ্জিরা বেড়িবাঁধ সড়ক</textPath></text>
        <text><textPath href="#ashraf">আশরাফাবাদ প্রধান</textPath></text>
      </g>
      <text x="2181" y="118" fontSize="37" fill="#828282" textAnchor="middle" {...label}>মাদ্রাসাপাড়া</text>
      <g fontSize="36" fill="#4d80b3" {...label} strokeWidth="4" stroke="#d5e8ee">
        <text><textPath href="#river1">বুড়িগঙ্গা নদী</textPath></text>
        <text x="2450" y="386" transform="rotate(-3 2450 386)">বুড়িগঙ্গা নদী</text>
      </g>
      <g fontSize="31" fill="#1c1c1c" {...label} strokeWidth="4" stroke="#fcd6a4">
        <text><textPath href="#hw1">জিঞ্জিরা - রামেরকান্দা সড়ক</textPath></text>
        <text><textPath href="#hw2">জিঞ্জিরা - রামেরকান্দা সড়ক</textPath></text>
        <text x="2578" y="1475" transform="rotate(-1 2578 1475)">জিঞ্জিরা - রামেরকান্দা</text>
      </g>
      <rect x="2063" y="1385" width="99" height="56" rx="6" fill="#f7e6cf" stroke="#e2bc8d" strokeWidth="3" />
      <text x="2113" y="1424" textAnchor="middle" fontSize="32" fill="#5a4020" fontFamily='"Noto Sans", sans-serif'>R820</text>

      {pins.map(([x, y]) => (
        <circle key={`c${x}`} cx={x - 1} cy={y + 3} r="42" fill="#3388ff" fillOpacity="0.2" stroke="#3388ff" strokeWidth="9" />
      ))}
      {pins.map(([x, y]) => (
        <path key={`s${x}`} d={`M${x} ${y}L${x + 16} ${y - 60}Q${x + 40} ${y - 86} ${x + 68} ${y - 72}Q${x + 74} ${y - 44} ${x + 44} ${y - 26}Z`} fill="#000" opacity="0.28" filter="url(#soft)" />
      ))}
      {pins.map(([x, y]) => (
        <g key={`p${x}`} transform={`translate(${x - 37} ${y - 118}) scale(2.95)`}>
          <path d="M12.5 .6C5.9 .6 .6 5.8 .6 12.4c0 2.500 .9 4.700 2 6.900L12.500 40l9.900-20.700c1.100-2.200 2-4.400 2-6.900C24.400 5.800 19.100 .6 12.500 .6Z" fill="url(#pin)" stroke="#2e6fa4" strokeWidth="1.1" />
          <circle cx="12.5" cy="12.5" r="4.1" fill="#fff" />
        </g>
      ))}
    </svg>
  );
}

function MapPanel() {
  return (
    <section className="relative min-w-0 flex-1 overflow-hidden bg-[#f2efe9]" aria-label="Map">
      <CityMap />
      <div className="absolute left-[10px] top-[10px] flex flex-col rounded-[4px] border-2 border-black/20 bg-clip-padding">
        <button type="button" aria-label="Zoom in" className="flex h-[30px] w-[30px] items-center justify-center rounded-t-[2px] border-b border-[#ccc] bg-white pt-[2px] text-[#ffb545]">
          <svg width="12" height="12" viewBox="0 0 12 12" aria-hidden="true"><path d="M6 1V11M1 6H11" stroke="currentColor" strokeWidth="2.5" /></svg>
        </button>
        <button type="button" aria-label="Zoom out" className="flex h-[30px] w-[30px] items-center justify-center rounded-b-[2px] bg-white pt-[2px] text-[#ffb545]">
          <svg width="12" height="12" viewBox="0 0 12 12" aria-hidden="true"><path d="M1 6H11" stroke="currentColor" strokeWidth="2.5" /></svg>
        </button>
      </div>
      <div className="absolute left-[310px] top-[137px] w-[242px]">
        <div className="absolute left-[113px] top-[39px] h-4 w-4 rotate-45 bg-[#565b74] shadow-lg" />
        <div className="relative flex h-[47px] items-center rounded-[5px] border-l-[5px] border-[#19c46b] bg-[#565b74] pl-[21px] pt-[2px] font-['Liberation_Sans',sans-serif] text-[15px] text-[#ececec] shadow-[0_3px_14px_rgba(0,0,0,0.4)]">
          <span className="mr-1 text-[15px]" aria-hidden="true">🏃‍♂️</span>
          Running on February 22
        </div>
      </div>
      <div className="absolute bottom-0 right-0 flex h-[9px] items-center gap-[3px] bg-white/80 px-1 font-['Liberation_Sans',sans-serif] text-[8px] leading-none text-[#ffb545]">
        <svg width="7" height="5" viewBox="0 0 7 5" aria-hidden="true"><path d="M0 0H7V3H0Z" fill="#4c7be1" /><path d="M0 3H7V5H0Z" fill="#ffd500" /></svg>
        <a href="#leaflet">Leaflet</a>
      </div>
    </section>
  );
}

/* ------------------------------------------------------------------ */
/* Sidebar                                                             */
/* ------------------------------------------------------------------ */

interface Workout {
  km: string;
  min: string;
  pace: string;
  cadence: string;
}

const workouts: Workout[] = [
  { km: "3", min: "5", pace: "1.667", cadence: "2" },
  { km: "3", min: "2", pace: "0.667", cadence: "5" },
  { km: "3", min: "5", pace: "1.667", cadence: "2" },
  { km: "3", min: "2", pace: "0.667", cadence: "5" },
  { km: "3", min: "2", pace: "0.667", cadence: "5" },
];

function Logo() {
  return (
    <div className="flex items-center justify-center gap-[13px]">
      <svg width="30" height="53" viewBox="0 0 30 53" aria-hidden="true">
        <path
          fill="#19c46b"
          fillRule="evenodd"
          d="M15 .5C9 6 1.200 12.500 1.200 21.500C1.200 32 9.500 44 15.200 52C21 43.500 29 32 29 20C29 14.500 20.500 12.700 16.800 11.800C14.300 10.800 14.800 5 15 .5ZM15 17.600A6.900 6.900 0 1 1 15 31.400A6.900 6.900 0 1 1 15 17.600Z"
        />
      </svg>
      <span className="pb-1 font-['Lato','Open_Sans',sans-serif] text-[30px] font-bold leading-none text-[#e6e8ee]">mapty</span>
    </div>
  );
}

function ThemeToggle() {
  return (
    <label className="ml-12 block w-[86px] cursor-pointer">
      <input type="checkbox" className="sr-only" aria-label="Day theme" defaultChecked />
      <svg width="86" height="35" viewBox="0 0 86 35" className="block" aria-hidden="true">
        <rect x="3.5" y="2.5" width="56" height="30" rx="15" fill="#96dcee" stroke="#72cce3" strokeWidth="5" />
        <circle cx="17" cy="17.5" r="13.5" fill="#fffaa8" stroke="#f5eb71" strokeWidth="5" />
        <path d="M47 16H68M62 26H86M52 33H67" stroke="#fff" strokeWidth="2" />
      </svg>
    </label>
  );
}

function PencilIcon() {
  return (
    <svg width="24" height="24" viewBox="0 0 24 24" aria-hidden="true">
      <path d="M3 21V17.600L14.400 6.200L17.400 9.200L5.800 21Z" fill="none" stroke="currentColor" strokeWidth="1.9" strokeLinejoin="round" />
      <path d="M15.800 4.900L17.900 2.800Q18.900 2 19.900 2.900L21.200 4.200Q22 5.200 21.200 6.100L19 8.200Z" fill="currentColor" />
    </svg>
  );
}

function TrashIcon() {
  return (
    <svg width="24" height="24" viewBox="0 0 24 24" fill="none" stroke="currentColor" strokeWidth="2" aria-hidden="true">
      <path d="M4 4H20M9 3H15M6 4V20H18V4M10.500 8V16.500M13.500 8V16.500" />
    </svg>
  );
}

function Stat({ icon, value, unit }: { icon: string; value: string; unit: string }) {
  return (
    <div className="flex items-baseline whitespace-nowrap">
      <span className="mr-[2px] w-[23px] text-[18px] leading-5" aria-hidden="true">{icon}</span>
      <span className="text-[15px] leading-5 text-[#ececec]">{value}</span>
      <span className="ml-[5px] text-[11px] font-bold uppercase text-[#aaa]">{unit}</span>
    </div>
  );
}

function WorkoutCard({ w }: { w: Workout }) {
  return (
    <li className="h-[94px] shrink-0 rounded-[5px] border-l-[5px] border-[#19c46b] bg-[#3d4465] pl-[22px] pr-[22px] pt-[15px]">
      <div className="flex justify-between">
        <h2 className="pt-[2px] text-[17px] font-semibold leading-6 text-[#ececec]">Running on February 22</h2>
        <div className="flex gap-[10px]">
          <button type="button" aria-label="Edit workout" className="h-6 w-6 text-[#ffb545]"><PencilIcon /></button>
          <button type="button" aria-label="Delete workout" className="h-6 w-6 text-[#ff7545]"><TrashIcon /></button>
        </div>
      </div>
      <div className="mt-[11px] grid grid-cols-[114px_114px_122px_1fr]">
        <Stat icon="🏃‍♂️" value={w.km} unit="km" />
        <Stat icon="⏱️" value={w.min} unit="min" />
        <Stat icon="⚡️" value={w.pace} unit="min/km" />
        <Stat icon="🦶🏼" value={w.cadence} unit="spm" />
      </div>
    </li>
  );
}

function Sidebar() {
  return (
    <aside className="flex w-[41.25%] min-w-[620px] flex-col bg-[#565b74] pb-[39px] pt-[30px]">
      <Logo />
      <div className="mt-[59px]">
        <ThemeToggle />
      </div>
      <ul className="mt-[29px] flex max-h-[491px] flex-col gap-[18px] overflow-y-auto px-20 [scrollbar-width:none]">
        {workouts.map((w, i) => (
          <WorkoutCard key={i} w={w} />
        ))}
      </ul>
      <div className="mt-[40px] flex justify-center gap-[6px]">
        <button type="button" className="flex h-[23px] w-[34px] justify-center overflow-hidden bg-[#494435] pt-[11px] text-[11px] leading-[14px] text-[#e0a045]">jan</button>
        <button type="button" className="flex h-[23px] w-[36px] justify-center overflow-hidden bg-[#215952] pt-[11px] text-[11px] leading-[14px] text-[#e0a045]">feb</button>
      </div>
    </aside>
  );
}

/* ------------------------------------------------------------------ */
/* Chart                                                               */
/* ------------------------------------------------------------------ */

const C = {
  teal: "#55c5c5",
  green: "#5bcb8c",
  lime: "#8ac962",
  yellow: "#cbc962",
  orange: "#d29462",
  purple: "#7a5ed2",
};

const series: { name: string; color: string; x: number }[] = [
  { name: "Workout Duration", color: C.teal, x: 110 },
  { name: "Workout Distance", color: C.green, x: 289 },
  { name: "Running Cadence", color: C.lime, x: 464 },
  { name: "Cycling pace", color: C.yellow, x: 638 },
  { name: "Running elevGain", color: C.orange, x: 782 },
  { name: "Cycling speed", color: C.purple, x: 958 },
];

const long = [5, 3, 2, 1.667];
const short = [2, 3, 5, 0.667];
const days = [long, short, long, short, short, long, long];

const LEFT = 102;
const RIGHT = 1160;
const TOP = 138;
const BOTTOM = 498;
const STEP = (RIGHT - LEFT) / 7;

function Chart() {
  return (
    <svg viewBox="0 0 1200 599" className="block w-full bg-[#7e8392]" role="img" aria-label="Monthly data analysis">
      <g fontFamily='"Liberation Sans", Arial, sans-serif'>
        <text x="600" y="65" textAnchor="middle" fontSize="17" fontWeight="bold" fill="#1c1c1f">Monthly data analysis</text>
        <text x="600" y="91" textAnchor="middle" fontSize="12" fill="#565b7a">Whatever you have done so far.</text>
      </g>
      {series.map((s) => (
        <g key={s.name}>
          <rect x={s.x + 1} y="114" width="41" height="15" fill={s.color} fillOpacity="0.4" stroke={s.color} strokeWidth="2" />
          <text x={s.x + 48} y="125" fontSize="14" fontWeight="bold" fill="#1c1c1f" fontFamily='"Liberation Serif", "Times New Roman", serif'>{s.name}</text>
        </g>
      ))}
      <g fill="#666a84">
        {Array.from({ length: 11 }, (_, i) => (
          <rect key={i} x={LEFT - 7} y={TOP + i * 36} width={RIGHT - LEFT + 8} height="1" />
        ))}
        {Array.from({ length: 8 }, (_, i) => (
          <rect key={i} x={Math.floor(LEFT + i * STEP)} y={TOP} width="1" height={BOTTOM - TOP + 9} />
        ))}
      </g>
      <g fontFamily='"Liberation Sans", Arial, sans-serif' fontSize="12" fill="#565b7a">
        {Array.from({ length: 11 }, (_, i) => (
          <text key={i} x="92" y={TOP + i * 36 + 4} textAnchor="end">{i === 10 ? "0" : (5 - i * 0.5).toFixed(1)}</text>
        ))}
        {days.map((_, i) => (
          <text key={i} x={LEFT + (i + 0.5) * STEP} y="520" textAnchor="middle">February 22</text>
        ))}
      </g>
      {days.map((values, i) =>
        values.map((v, j) => {
          const x = LEFT + i * STEP + 16 + j * 20.15;
          const y = BOTTOM + 1 - v * 72;
          const color = series[j].color;
          return (
            <g key={`${i}-${j}`}>
              <rect x={x} y={y} width="18" height={BOTTOM - y} fill={color} fillOpacity="0.4" />
              <path d={`M${x + 1} ${BOTTOM}V${y + 1}H${x + 17}V${BOTTOM}`} fill="none" stroke={color} strokeWidth="2" />
            </g>
          );
        }),
      )}
      <g fontFamily='"Liberation Serif", "Times New Roman", serif' fontSize="20" fontWeight="bold" fill="#565b7a" textAnchor="middle">
        <text x="631" y="548">Date</text>
        <text transform="translate(61 319) rotate(-90)">Value</text>
      </g>
    </svg>
  );
}

function Options() {
  const select = "h-[27px] w-[99px] rounded-[3px] bg-[#d9e1e2] pl-[11px] pr-[13px] text-[14px] text-[#222]";
  const text = "w-[99px] pt-[2px] text-[15px] font-semibold text-[#ececec]";
  return (
    <form className="mx-auto flex h-[100px] w-[486px] items-start rounded-[5px] bg-[#505673] px-[25px] pt-[25px]">
      <div className="flex h-[27px] items-center">
        <label htmlFor="data-type" className={text}>Data Type</label>
        <select id="data-type" className={select} defaultValue="All">
          <option>All</option>
          <option>Running</option>
          <option>Cycling</option>
        </select>
      </div>
      <div className="ml-[25px] flex h-[27px] items-center">
        <label htmlFor="chart-type" className={text}>Chart Type</label>
        <select id="chart-type" className={select} defaultValue="Bar Chart">
          <option>Bar Chart</option>
          <option>Line Chart</option>
        </select>
      </div>
    </form>
  );
}

export default function App() {
  return (
    <div className="bg-[#666a84] pb-5 font-['Manrope','Inter',sans-serif]">
      <div className="flex">
        <Sidebar />
        <MapPanel />
      </div>
      <div className="pt-5">
        <Options />
      </div>
      <div className="mx-auto mt-[38px] w-3/4">
        <Chart />
      </div>
    </div>
  );
}
